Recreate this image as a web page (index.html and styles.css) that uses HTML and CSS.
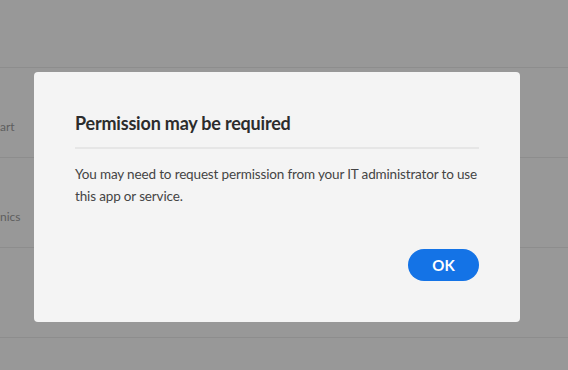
FILE: index.html
```html
<!DOCTYPE html>
<html lang="en">
<head>
<meta charset="utf-8">
<title>Permission may be required</title>
<link rel="stylesheet" href="styles.css">
</head>
<body>
<div class="page">
  <div class="row row-top"></div>
  <div class="row"><span class="row-label">art</span></div>
  <div class="row"><span class="row-label">nics</span></div>
  <div class="row"></div>
</div>
<div class="overlay">
  <div class="dialog" role="dialog">
    <h2 class="dialog-title">Permission may be required</h2>
    <hr class="dialog-divider">
    <p class="dialog-body">You may need to request permission from your IT administrator to use this app or service.</p>
    <button class="btn-ok">OK</button>
  </div>
</div>
</body>
</html>
```

FILE: styles.css
```css
html, body {
  margin: 0;
  padding: 0;
  width: 568px;
  height: 370px;
  overflow: hidden;
  background: #989898;
  font-family: Lato, "Open Sans", sans-serif;
}
.page {
  display: flex;
  flex-direction: column;
}
.row {
  height: 89px;
  border-bottom: 1px solid #8d8d8d;
  display: flex;
  align-items: flex-start;
}
.row-top {
  height: 67px;
}
.row-label {
  padding-top: 51px;
  font-size: 12px;
  color: #5e5e5e;
  line-height: 16px;
}
.overlay {
  position: absolute;
  left: 0;
  top: 0;
  width: 568px;
  height: 370px;
}
.dialog {
  position: absolute;
  left: 34px;
  top: 72px;
  width: 486px;
  height: 250px;
  box-sizing: border-box;
  background: #f4f4f4;
  border-radius: 4px;
  padding: 39px 41px 41px;
  display: flex;
  flex-direction: column;
}
.dialog-title {
  margin: 0;
  font-size: 18px;
  letter-spacing: -0.2px;
  line-height: 24px;
  font-weight: 700;
  color: #2c2c2c;
}
.dialog-divider {
  margin: 12px 0 0;
  border: 0;
  height: 2px;
  background: #e6e6e6;
}
.dialog-body {
  margin: 14px 0 0;
  font-size: 13.5px;
  letter-spacing: -0.15px;
  line-height: 22px;
  color: #444444;
}
.btn-ok {
  margin-top: auto;
  align-self: flex-end;
  width: 71px;
  height: 32px;
  border: 0;
  border-radius: 16px;
  background: #1473e6;
  color: #ffffff;
  font-family: Lato, "Open Sans", sans-serif;
  font-weight: 700;
  font-size: 15px;
  padding: 0;
}
```
